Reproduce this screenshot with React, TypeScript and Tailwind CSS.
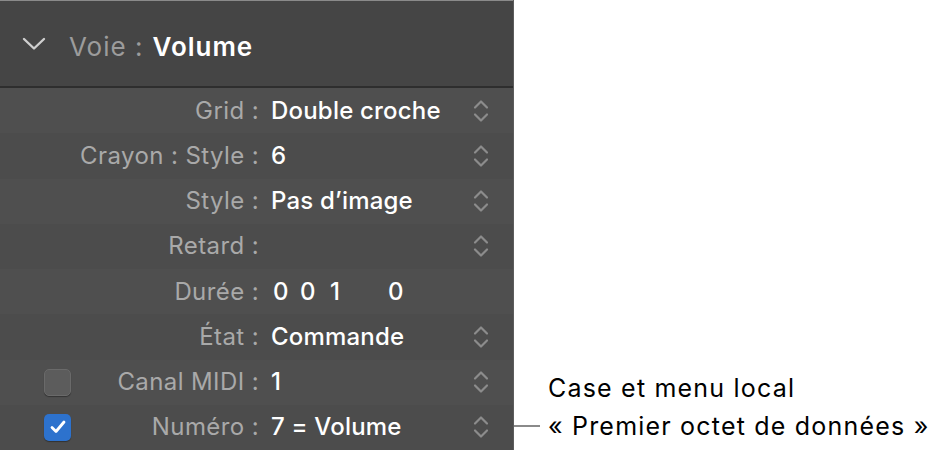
import React from "react";

const font = { fontFamily: "Inter, 'Noto Sans', sans-serif" };

function UpDown() {
  return (
    <svg width="18" height="26" viewBox="0 0 18 26" fill="none" className="text-[#8c8c8c]">
      <path d="M3 9.5 L9 3.5 L15 9.5" stroke="currentColor" strokeWidth="2.2" strokeLinecap="round" strokeLinejoin="round" />
      <path d="M3 16.5 L9 22.5 L15 16.5" stroke="currentColor" strokeWidth="2.2" strokeLinecap="round" strokeLinejoin="round" />
    </svg>
  );
}

function Check({ checked }: { checked: boolean }) {
  if (checked) {
    return (
      <div className="flex h-[27px] w-[27px] items-center justify-center rounded-[5px] bg-[#2d72cd] shadow-[0_1px_1px_rgba(0,0,0,0.35)]">
        <svg width="18" height="16" viewBox="0 0 18 16" fill="none">
          <path d="M3 8.5 L7 12.5 L15 3" stroke="white" strokeWidth="2.8" strokeLinecap="round" strokeLinejoin="round" />
        </svg>
      </div>
    );
  }
  return <div className="h-[27px] w-[27px] rounded-[5px] border border-[#6a6a6a] bg-[#5c5c5c] shadow-[0_1px_1px_rgba(0,0,0,0.35)]" />;
}

type Row = {
  label: string;
  value?: React.ReactNode;
  stepper?: boolean;
  check?: boolean;
};

const rows: Row[] = [
  { label: "Grid :", value: "Double croche", stepper: true },
  { label: "Crayon : Style :", value: "6", stepper: true },
  { label: "Style :", value: "Pas d’image", stepper: true },
  { label: "Retard :", stepper: true },
  {
    label: "Durée :",
    value: (
      <span className="flex">
        <span className="w-[29px] pl-[2px]">0</span>
        <span className="w-[30px]">0</span>
        <span className="w-[58px]">1</span>
        <span>0</span>
      </span>
    ),
  },
  { label: "État :", value: "Commande", stepper: true },
  { label: "Canal MIDI :", value: "1", stepper: true, check: false },
  { label: "Numéro :", value: "7 = Volume", stepper: true, check: true },
];

export default function App() {
  return (
    <div className="flex h-[450px] w-[934px] bg-white" style={font}>
      <div className="flex w-[514px] shrink-0 flex-col border-r border-[#5c5c5c] bg-[#4e4e4e]">
        {/* Header */}
        <div className="flex h-[87px] items-center border-t border-[#8a8a8a] bg-[#454545] pl-[22px] pt-[5px] text-[26px] tracking-[1px]">
          <svg width="24" height="14" viewBox="0 0 24 14" fill="none" className="mr-[23px] mt-[-4px]">
            <path d="M2 2 L12 11.5 L22 2" stroke="#cfcfcf" strokeWidth="2.4" strokeLinecap="round" strokeLinejoin="round" />
          </svg>
          <span className="text-[#9c9c9c]">Voie :</span>
          <span className="ml-[9px] font-semibold text-white">Volume</span>
        </div>
        <div className="h-[2px] bg-[#2e2e2e]" />

        {/* Rows */}
        <div className="flex flex-1 flex-col">
          {rows.map((r, i) => (
            <div
              key={r.label}
              className={`flex h-[45.25px] items-center text-[24px] tracking-[0.4px] ${i % 2 === 0 ? "bg-[#4f4f4f]" : "bg-[#4c4c4c]"}`}
            >
              <div className="flex w-[259px] items-center pl-[44px]">
                <div className="w-[27px]">{r.check !== undefined && <Check checked={r.check} />}</div>
                <span className="flex-1 text-right text-[#a9a9a9]">{r.label}</span>
              </div>
              <div className="ml-[12px] flex-1 font-medium tracking-[0.2px] text-white">{r.value}</div>
              <div className="mr-[23px] flex w-[18px] items-center">{r.stepper && <UpDown />}</div>
            </div>
          ))}
        </div>
      </div>

      {/* Callout */}
      <div className="flex flex-col justify-end pb-[5px] text-[25px] leading-[38px] tracking-[1.2px] text-black">
        <div className="pl-[34px]">Case et menu local</div>
        <div className="flex items-center">
          <div className="h-[2px] w-[26px] bg-[#8a8a8a]" />
          <span className="ml-[8px]">« Premier octet de données »</span>
        </div>
      </div>
    </div>
  );
}
